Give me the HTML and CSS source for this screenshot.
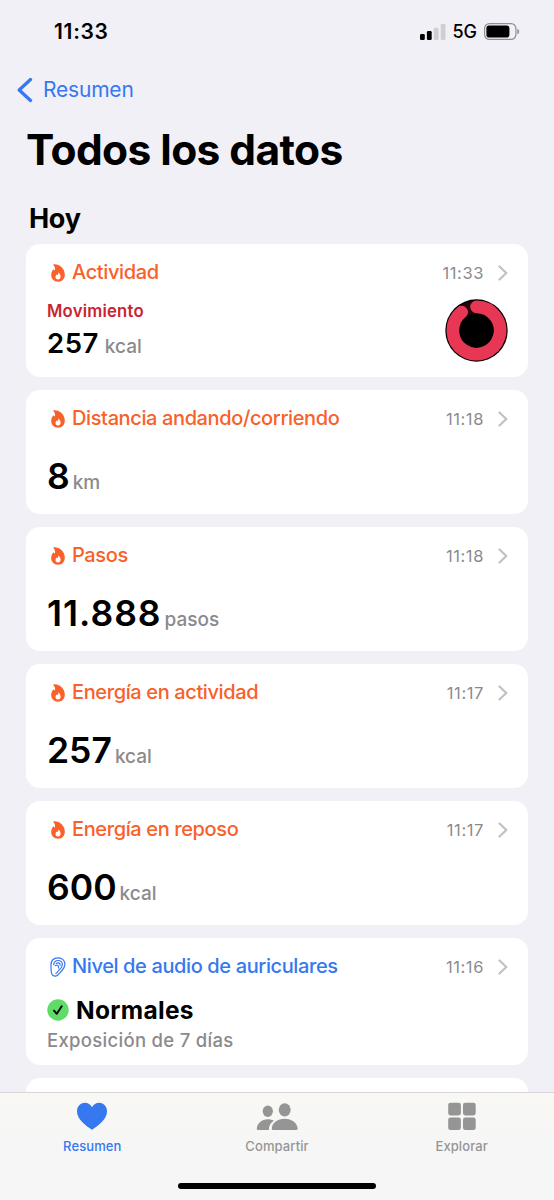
FILE: index.html
```html
<!DOCTYPE html>
<html lang="es">
<head>
<meta charset="utf-8">
<title>Todos los datos</title>
<link rel="stylesheet" href="styles.css">
</head>
<body>
<svg class="defs" width="0" height="0" aria-hidden="true">
  <symbol id="flame" viewBox="0 0 14 18">
    <path fill-rule="evenodd" d="M2.900.3C8.500-.1 13.800 4.300 13.800 10.800c0 4.200-2.800 7-6.800 7S.2 15 .2 11.100C.2 8.900.9 7.100 1.900 5.900c.4-.5.900-.4 1.200 0 .2.300.5.500.8.500C4.400 4.700 4 3 2.500 1.300 2.100.8 2.300.3 2.900.3zM7.300 8.200c.2 1.500-.2 2.200-.8 2.800-.4-.1-.6-.3-.8-.5-.8.800-1.200 1.600-1.200 2.500 0 1.500 1 2.400 2.500 2.400s2.600-1 2.600-2.600c0-1.900-.9-3.500-2.300-4.600z"/>
  </symbol>
  <symbol id="chevron" viewBox="0 0 10 16">
    <path d="M1.500 1.500 8.300 8l-6.800 6.500" fill="none" stroke="currentColor" stroke-width="2.300" stroke-linecap="round" stroke-linejoin="round"/>
  </symbol>
</svg>
<div class="phone">
  <header class="status">
    <span class="clock">11:33</span>
    <div class="status-icons">
      <svg class="signal" viewBox="0 0 26 16">
        <rect x="0" y="10" width="4.800" height="6" rx="1.300"/>
        <rect x="6.900" y="7" width="4.800" height="9" rx="1.300"/>
        <g fill="#cfcfd3"><rect x="13.800" y="3.800" width="4.800" height="12.200" rx="1.300"/><rect x="20.700" y="0" width="4.800" height="16" rx="1.300"/></g>
      </svg>
      <span class="network">5G</span>
      <svg class="battery" viewBox="0 0 36 17">
        <rect x=".6" y=".6" width="31.300" height="15.800" rx="4.800" fill="none" stroke="#8f8f93" stroke-width="1.200"/>
        <rect x="2.400" y="2.500" width="23" height="12" rx="2.800"/>
        <path d="M33.300 5.700c2.500.9 2.500 4.700 0 5.600z" fill="#8f8f93"/>
      </svg>
    </div>
  </header>
  <nav class="back">
    <svg class="back-arrow" viewBox="0 0 16 26"><path d="M13.500 2.500 2.200 13l11.300 10.500" fill="none" stroke="currentColor" stroke-width="3.300" stroke-linecap="round" stroke-linejoin="round"/></svg>
    <span>Resumen</span>
  </nav>
  <h1 class="title">Todos los datos</h1>
  <h2 class="day">Hoy</h2>
  <main class="cards">
    <section class="card activity">
      <div class="head"><svg class="icon"><use href="#flame"/></svg><h3 class="name">Actividad</h3><time class="time">11:33</time><svg class="chevron"><use href="#chevron"/></svg></div>
      <div class="activity-body">
        <div>
          <div class="move">Movimiento</div>
          <div class="move-value"><b>257</b><span>kcal</span></div>
        </div>
        <svg class="ring" viewBox="0 0 64 64">
          <circle cx="31.500" cy="32.500" r="31.200" fill="#000"/>
          <circle cx="31.500" cy="32.500" r="23.600" fill="none" stroke="#26060c" stroke-width="12.500"/>
          <path d="M31.500 8.900A23.600 23.600 0 1 1 16.700 14.100" fill="none" stroke="#e73755" stroke-width="12.600" stroke-linecap="round"/>
        </svg>
      </div>
    </section>
    <section class="card">
      <div class="head"><svg class="icon"><use href="#flame"/></svg><h3 class="name">Distancia andando/corriendo</h3><time class="time">11:18</time><svg class="chevron"><use href="#chevron"/></svg></div>
      <div class="value"><b>8</b><span>km</span></div>
    </section>
    <section class="card">
      <div class="head"><svg class="icon"><use href="#flame"/></svg><h3 class="name">Pasos</h3><time class="time">11:18</time><svg class="chevron"><use href="#chevron"/></svg></div>
      <div class="value steps"><b>11.888</b><span>pasos</span></div>
    </section>
    <section class="card">
      <div class="head"><svg class="icon"><use href="#flame"/></svg><h3 class="name">Energía en actividad</h3><time class="time">11:17</time><svg class="chevron"><use href="#chevron"/></svg></div>
      <div class="value"><b>257</b><span>kcal</span></div>
    </section>
    <section class="card">
      <div class="head"><svg class="icon"><use href="#flame"/></svg><h3 class="name">Energía en reposo</h3><time class="time">11:17</time><svg class="chevron"><use href="#chevron"/></svg></div>
      <div class="value"><b>600</b><span>kcal</span></div>
    </section>
    <section class="card audio">
      <div class="head">
        <svg class="icon ear" viewBox="0 0 16 20" fill="none" stroke="currentColor" stroke-width="1.200" stroke-linecap="round" stroke-linejoin="round">
          <path d="M2.800 18.300C.8 17.200 1 14.500 1 8.200 1 3.600 3.800.9 8 .9s6.900 2.700 6.900 6.700c0 3.600-2.200 5.200-4.200 7.300-1.700 1.800-2.600 3.900-4.900 4.200-1.100.1-2.100-.1-3-.8z"/>
          <path d="M3.700 7.600c.3-2.600 2-4.100 4.400-4.100 2.600 0 4.300 1.600 4.300 4.100 0 2.500-1.500 3.700-3.400 5.500-1.200 1.200-1.900 2.700-3.100 3.400M5.200 8.700c2.200-1.100 3.900.1 3.200 2.300M6.300 6.600c1.800-1.300 3.900-.4 3.900 1.500"/>
        </svg>
        <h3 class="name">Nivel de audio de auriculares</h3><time class="time">11:16</time><svg class="chevron"><use href="#chevron"/></svg>
      </div>
      <div class="level">
        <svg class="check" viewBox="0 0 22 22"><circle cx="11" cy="11" r="10.700" fill="#5edc68"/><path d="m7 11.600 2.800 3.200 4.900-7.600" fill="none" stroke="#000" stroke-width="1.900" stroke-linecap="round" stroke-linejoin="round"/></svg>
        <span>Normales</span>
      </div>
      <div class="exposure">Exposición de 7 días</div>
    </section>
    <section class="card next"></section>
  </main>
  <footer class="tabbar">
    <div class="tabs">
      <div class="tab active">
        <svg class="tab-icon" viewBox="0 0 42 28"><path d="M21 27.800C13 22.500 6 16.500 6 9.200 6 4.400 9.400.8 13.700.8 17 .8 19.500 2.500 21 5.200 22.500 2.500 25 .8 28.300.8 32.600.8 36 4.400 36 9.200 36 16.500 29 22.500 21 27.800z"/></svg>
        <span>Resumen</span>
      </div>
      <div class="tab">
        <svg class="tab-icon" viewBox="0 0 42 28"><ellipse cx="11.800" cy="9.200" rx="5.100" ry="5.700"/><ellipse cx="28.700" cy="7.800" rx="6" ry="6.600"/><path d="M1.900 28C.9 28 .7 27.300.8 26.300 1.300 21.300 5.900 17.300 11.800 17.300c2.300 0 4.300.5 6 1.500-3.200 2-5 4.800-4.900 9.200zM17.600 28c-1.500 0-1.900-.7-1.800-1.800.5-5.200 5.500-9.500 12.900-9.500s12.400 4.300 12.900 9.500c.1 1.100-.3 1.800-1.800 1.800z"/></svg>
        <span>Compartir</span>
      </div>
      <div class="tab">
        <svg class="tab-icon" viewBox="0 0 42 28"><rect x="7.200" y=".7" width="12.700" height="12.700" rx="2.300"/><rect x="22" y=".7" width="12.700" height="12.700" rx="2.300"/><rect x="7.200" y="15.500" width="12.700" height="12.500" rx="2.300"/><rect x="22" y="15.500" width="12.700" height="12.500" rx="2.300"/></svg>
        <span>Explorar</span>
      </div>
    </div>
    <div class="home"></div>
  </footer>
</div>
</body>
</html>
```

FILE: styles.css
```css
* { box-sizing: border-box; }
body, h1, h2, h3 { margin: 0; }
body { font-family: Inter, "Liberation Sans", sans-serif; background: #f1f0f6; color: #000; }
svg { display: block; flex: none; }
.defs { position: absolute; }
.phone { width: 554px; height: 1200px; overflow: hidden; display: flex; flex-direction: column; white-space: nowrap; }

.status { height: 63px; flex: none; display: flex; justify-content: space-between; align-items: center; padding: 0 34px 0 54px; }
.clock { font-size: 21px; font-weight: 600; letter-spacing: 0.7px; }
.status-icons { display: flex; align-items: center; }
.signal { width: 26px; height: 16px; }
.network { font-size: 18px; font-weight: 500; margin: 0 7px 0 6px; }
.battery { width: 36px; height: 17px; }

.back { height: 53px; flex: none; display: flex; align-items: center; gap: 10px; padding-left: 17px; color: #3578ef; font-size: 21px; letter-spacing: -0.2px; }
.back-arrow { width: 16px; height: 26px; }
.title { height: 66px; line-height: 67px; flex: none; padding-left: 26px; font-size: 42.500px; font-weight: 700; letter-spacing: -0.6px; }
.day { height: 62px; line-height: 73px; flex: none; padding-left: 29px; font-size: 27px; font-weight: 700; letter-spacing: -0.3px; }

.cards { flex: 1; min-height: 0; overflow: hidden; display: flex; flex-direction: column; gap: 13px; padding: 0 26px; }
.card { flex: none; height: 124px; background: #fff; border-radius: 14px; padding: 15px 20px 0 21px; }
.activity { height: 133px; }
.audio { height: 127px; }
.head { display: flex; align-items: center; height: 27px; color: #f9602a; fill: currentColor; }
.icon { width: 14px; height: 18px; margin: 0 7px 0 4px; }
.ear { width: 16px; height: 20px; margin: 0 6px 0 3px; fill: none; }
.audio .head { color: #3578ef; }
.name { font-size: 20px; line-height: 27px; font-weight: 500; letter-spacing: -0.38px; flex: 1; }
.time { font-size: 16.500px; color: #8a8a8e; letter-spacing: 0.6px; }
.chevron { width: 10px; height: 16px; margin-left: 14px; color: #c2c2c6; }

.activity-body { display: flex; justify-content: space-between; }
.move { margin-top: 14px; line-height: 22px; font-size: 16.700px; font-weight: 600; letter-spacing: 0.2px; color: #c9252f; }
.move-value, .value { display: flex; align-items: baseline; }
.move-value { line-height: 43px; gap: 6px; }
.move-value b { font-size: 27.500px; font-weight: 600; letter-spacing: 0.5px; }
.move-value span, .value span { color: #8a8a8e; font-size: 19px; font-weight: 500; }
.ring { width: 64px; height: 64px; margin-top: 12px; margin-right: -1px; }
.value { line-height: 50px; margin-top: 20px; gap: 4px; }
.value b { font-size: 35.500px; font-weight: 600; }
.steps b { letter-spacing: 1px; }
.steps, .value { gap: 3px; }
.level { display: flex; align-items: center; gap: 7px; height: 34px; margin-top: 13px; font-size: 24.500px; font-weight: 700; letter-spacing: 0.3px; }
.check { width: 22px; height: 22px; }
.exposure { font-size: 18.500px; line-height: 26px; color: #8a8a8e; font-weight: 500; letter-spacing: 0.3px; }

.tabbar { flex: none; height: 108px; border-top: 1px solid #d7d7d7; background: linear-gradient(#f9f8f4, #f6f6f6 45%, #f6f6f8); display: flex; flex-direction: column; align-items: center; }
.tabs { width: 554px; height: 90px; display: grid; grid-template-columns: repeat(3, 1fr); }
.tab { display: flex; flex-direction: column; align-items: center; padding-top: 9px; color: #959595; fill: currentColor; font-size: 13px; font-weight: 500; letter-spacing: 0.1px; line-height: 20px; }
.tab span { margin-top: 6px; }
.active { color: #3578ef; }
.tab-icon { width: 42px; height: 28px; }
.home { width: 198px; height: 6px; border-radius: 3px; background: #000; }
```
